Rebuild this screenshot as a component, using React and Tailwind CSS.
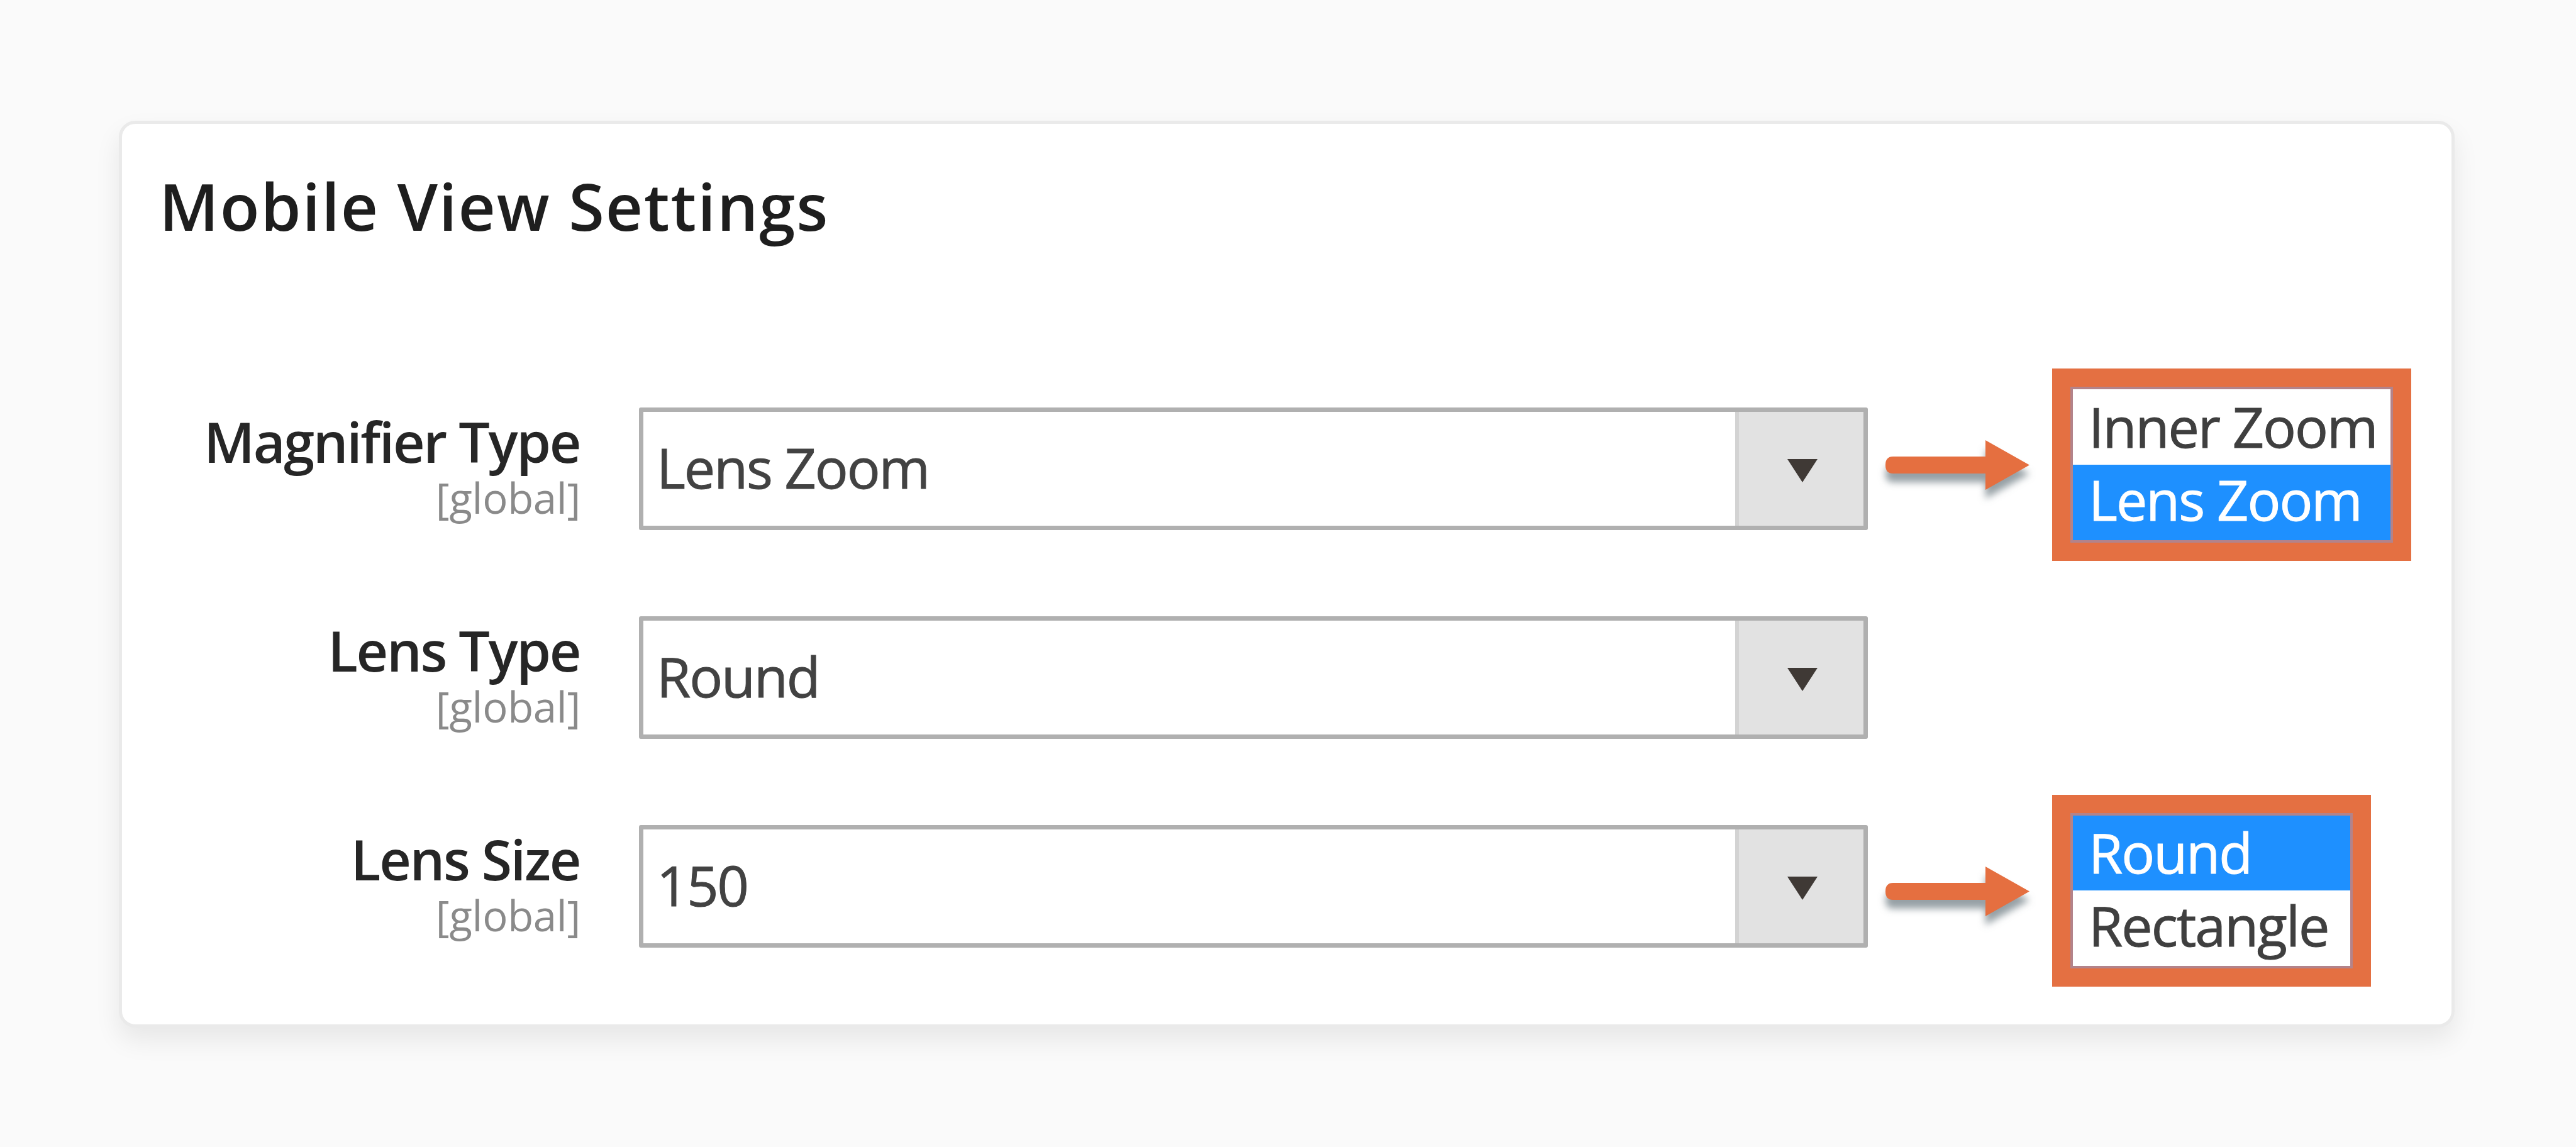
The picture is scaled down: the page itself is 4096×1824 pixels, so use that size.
import React from "react";

const fields = [
  {
    id: "magnifier-type",
    label: "Magnifier Type",
    value: "Lens Zoom",
    arrowClass: "mt-[109px]",
    calloutClass: "w-[571px]",
    options: [
      { text: "Inner Zoom", selected: false, className: "h-[120px] pb-[3px]" },
      { text: "Lens Zoom", selected: true, className: "h-[120px] pb-[10px]" },
    ],
  },
  {
    id: "lens-type",
    label: "Lens Type",
    value: "Round",
  },
  {
    id: "lens-size",
    label: "Lens Size",
    value: "150",
    arrowClass: "mt-[123px]",
    calloutClass: "mt-[14px] w-[507px]",
    options: [
      { text: "Round", selected: true, className: "h-[119px] pb-[4px]" },
      { text: "Rectangle", selected: false, className: "h-[120px] pb-[11px]" },
    ],
  },
];

function SelectBox({ value }) {
  return (
    <div className="mt-[62px] ml-[96px] flex h-[195px] w-[1954px] shrink-0 rounded-[3px] border-[7px] border-[#b0b0b0] bg-white">
      <div className="flex flex-1 items-center pb-[6px] pl-[21px] text-[88px] tracking-[-2.1px] text-[#424242] [-webkit-text-stroke:1px_#424242]">
        {value}
      </div>
      <div className="flex w-[204px] items-start justify-center border-l-[6px] border-[#d3d3d3] bg-[#e2e2e2] pt-[75px] pl-[4px]">
        <svg width="48" height="37" viewBox="0 0 48 37">
          <path d="M0 0H48L24 37Z" fill="#3f3935" />
        </svg>
      </div>
    </div>
  );
}

function Arrow({ className }) {
  return (
    <div className={`ml-[20px] w-[273px] shrink-0 ${className}`}>
      <svg
        width="250"
        height="110"
        viewBox="0 0 250 110"
        className="overflow-visible drop-shadow-[0_14px_6px_rgba(45,65,75,0.5)]"
      >
        <path
          d="M20 31H167V5L237 44.500L167 84V58H20Q8 58 8 44.500Q8 31 20 31Z"
          fill="#e56f40"
        />
      </svg>
    </div>
  );
}

function Callout({ options, className }) {
  return (
    <div className={`shrink-0 border-[29px] border-[#e47042] ${className}`}>
      <div className="border-[4px] border-[#b3838a]">
        {options.map((option) => (
          <div
            key={option.text}
            className={`flex items-center pl-[25px] text-[88px] leading-[100px] tracking-[-2px] [-webkit-text-stroke:1px_currentColor] ${
              option.className
            } ${
              option.selected
                ? "bg-[#1e90ff] text-white"
                : "bg-white text-[#3f3f3f]"
            }`}
          >
            {option.text}
          </div>
        ))}
      </div>
    </div>
  );
}

function App() {
  return (
    <div className="h-[1824px] w-[4096px] bg-[#fafafa] pt-[192px] pl-[189px] font-['Open_Sans',sans-serif]">
      <div className="h-[1442px] w-[3714px] rounded-[26px] border-[5px] border-[#eaeaea] bg-white shadow-[0_20px_40px_rgba(0,0,0,0.08)]">
        <h1 className="pt-[60px] pl-[59px] text-[103px] leading-[140px] font-semibold tracking-[1.9px] text-[#1e1e1e]">
          Mobile View Settings
        </h1>

        <div className="mt-[189px]">
          {fields.map((field) => (
            <div key={field.id} className="flex h-[332px] items-start">
              {/* Label and scope */}
              <div className="w-[726px] shrink-0 pt-[66px] text-right">
                <div className="-mr-[2px] text-[88px] leading-[100px] font-semibold tracking-[-2.4px] text-[#262626]">
                  {field.label}
                </div>
                <div className="-mr-[3px] text-[67px] leading-[78px] tracking-[-0.3px] text-[#8a8a8a]">
                  [global]
                </div>
              </div>

              <SelectBox value={field.value} />

              {field.options && (
                <>
                  <Arrow className={field.arrowClass} />
                  <Callout
                    options={field.options}
                    className={field.calloutClass}
                  />
                </>
              )}
            </div>
          ))}
        </div>
      </div>
    </div>
  );
}

export default App;
